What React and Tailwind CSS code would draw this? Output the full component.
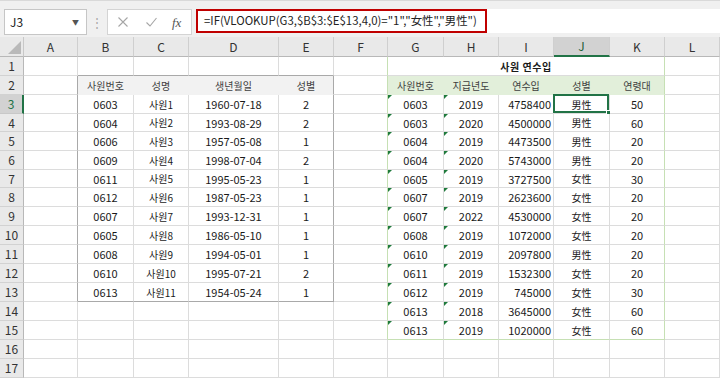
import React from "react";

const W = ["w-[54px]", "w-[56px]", "w-[55px]", "w-[90px]", "w-[55px]", "w-[54px]", "w-[56px]", "w-[55px]", "w-[55px]", "w-[56px]", "w-[55px]", "w-[55px]"];
const COLS = ["A", "B", "C", "D", "E", "F", "G", "H", "I", "J", "K", "L"];
const ROWH = { 4: "h-[18px]", 7: "h-[18px]" };

const LEFT = [
  ["0603", "사원1", "1960-07-18", "2"],
  ["0604", "사원2", "1993-08-29", "2"],
  ["0606", "사원3", "1957-05-08", "1"],
  ["0609", "사원4", "1998-07-04", "2"],
  ["0611", "사원5", "1995-05-23", "1"],
  ["0612", "사원6", "1987-05-23", "1"],
  ["0607", "사원7", "1993-12-31", "1"],
  ["0605", "사원8", "1986-05-10", "1"],
  ["0608", "사원9", "1994-05-01", "1"],
  ["0610", "사원10", "1995-07-21", "2"],
  ["0613", "사원11", "1954-05-24", "1"],
];
const RIGHT = [
  ["0603", "2019", "4758400", "男性", "50"],
  ["0603", "2020", "4500000", "男性", "60"],
  ["0604", "2019", "4473500", "男性", "20"],
  ["0604", "2020", "5743000", "男性", "20"],
  ["0605", "2019", "3727500", "女性", "30"],
  ["0607", "2019", "2623600", "女性", "20"],
  ["0607", "2022", "4530000", "女性", "20"],
  ["0608", "2019", "1072000", "女性", "20"],
  ["0610", "2019", "2097800", "男性", "20"],
  ["0611", "2019", "1532300", "女性", "20"],
  ["0612", "2019", "745000", "女性", "30"],
  ["0613", "2018", "3645000", "女性", "60"],
  ["0613", "2019", "1020000", "女性", "60"],
];

function Cell({ c, r, hClass }) {
  let rc = "border-r-[#dcdcdc]";
  let bc = "border-b-[#dcdcdc]";
  let bg = "bg-white";
  let content = null;
  let align = "justify-center";
  let tc = "text-[#1a1a1a]";
  let tri = false;
  let sel = false;

  if (r >= 2 && r <= 13 && (c === 0 || c === 4)) rc = "border-r-[#a9a9a9]";
  if (c >= 1 && c <= 4 && (r === 1 || r === 13)) bc = "border-b-[#a9a9a9]";
  if (r === 2 && c >= 1 && c <= 4) {
    bg = "bg-[#f2f2f2]";
    bc = "border-b-[#f2f2f2]";
    if (c < 4) rc = "border-r-[#f2f2f2]";
    content = ["사원번호", "성명", "생년월일", "성별"][c - 1];
    tc = "text-[#404040]";
  }
  if (r >= 3 && r <= 13 && c >= 1 && c <= 4) {
    content = LEFT[r - 3][c - 1];
  }
  if (r >= 1 && r <= 15 && (c === 5 || c === 10)) rc = "border-r-[#c6e0b4]";
  if (c >= 6 && c <= 10 && r === 15) bc = "border-b-[#c6e0b4]";
  if (r === 2 && c >= 6 && c <= 10) {
    bg = "bg-[#e2efda]";
    bc = "border-b-[#e2efda]";
    if (c < 10) rc = "border-r-[#e2efda]";
    content = ["사원번호", "지급년도", "연수입", "성별", "연령대"][c - 6];
    tc = "text-[#404040]";
  }
  if (r >= 3 && r <= 15 && c >= 6 && c <= 10) {
    content = RIGHT[r - 3][c - 6];
    if (c === 8) align = "justify-end pr-[2px]";
    if (c === 6 || c === 7) tri = true;
    if (c === 9 && r === 3) sel = true;
  }
  const cjk = content && /[^\x00-\x7f]/.test(content);

  return (
    <div className={`relative shrink-0 flex items-center border-r border-b ${W[c]} ${hClass} ${rc} ${bc} ${bg} ${align} ${tc}`}>
      {tri && (
        <div className="absolute left-0 top-0 w-[4px] h-[4px] bg-[#1f7a3c] [clip-path:polygon(0_0,100%_0,0_100%)]" />
      )}
      {content && (
        <span className={`leading-none pt-[1px] ${cjk ? "text-[10px]" : "text-[11px]"}`}>{content}</span>
      )}
      {sel && (
        <div className="absolute -left-[1px] -top-[1px] right-0 bottom-0 border-2 border-[#217346]">
          <div className="absolute -right-[4px] -bottom-[4px] w-[5px] h-[5px] bg-[#217346] border border-white" />
        </div>
      )}
    </div>
  );
}

function Row({ r }) {
  const hClass = ROWH[r] || "h-[19px]";
  const isSel = r === 3;
  const cells = [];
  for (let c = 0; c < 12; c++) {
    if (r === 1 && c === 6) {
      cells.push(
        <div key="m" className={`shrink-0 w-[277px] ${hClass} flex items-center justify-center border-r border-b border-r-[#c6e0b4] border-b-[#dcdcdc] bg-white font-bold text-[#1a1a1a]`}>
          <span className="leading-none pt-[1px] text-[10px] tracking-[0.5px]">사원 연수입</span>
        </div>
      );
      c = 10;
      continue;
    }
    cells.push(<Cell key={c} c={c} r={r} hClass={hClass} />);
  }
  return (
    <div className="flex">
      <div
        className={`shrink-0 w-[24px] ${hClass} flex items-center justify-center border-b text-[12px] ${
          isSel
            ? "bg-[#d2d2d2] border-r-2 border-r-[#217346] border-b-[#c8c8c8] text-[#217346]"
            : "bg-[#e9e9e9] border-r border-r-[#b8b8b8] border-b-[#d2d2d2] text-[#333]"
        }`}
      >
        <span className="leading-none">{r}</span>
      </div>
      {cells}
    </div>
  );
}

export default function App() {
  const rows = [];
  for (let r = 1; r <= 17; r++) rows.push(<Row key={r} r={r} />);
  return (
    <div className="w-[720px] h-[379px] overflow-hidden bg-white font-['Noto_Sans_CJK_KR','Noto_Sans',sans-serif] text-[10px] select-none">
      {/* Formula bar */}
      <div className="h-[37px] bg-[#f0f0f0] border-t border-t-[#d9d9d9] flex items-start pt-[8px]">
        <div className="ml-[4px] w-[83px] h-[26px] bg-white border border-[#c6c6c6] flex items-center justify-between pl-[5px] pr-[7px]">
          <span className="text-[12px] text-[#222] leading-none">J3</span>
          <span className="text-[7px] text-[#555] leading-none">▼</span>
        </div>
        <div className="w-[20px] h-[26px] flex items-center justify-center text-[#a8a8a8] text-[12px] leading-none">⋮</div>
        <div className="w-[85px] h-[26px] bg-white border border-[#d4d4d4] flex items-center">
          <svg width="12" height="12" viewBox="0 0 12 12" className="ml-[9px]">
            <path d="M1.5 1.5 L10.5 10.5 M10.5 1.5 L1.5 10.5" stroke="#a6a6a6" strokeWidth="1.1" fill="none" />
          </svg>
          <svg width="13" height="12" viewBox="0 0 13 12" className="ml-[16px]">
            <path d="M1.5 6.5 L5 10 L11.5 2" stroke="#a6a6a6" strokeWidth="1.1" fill="none" />
          </svg>
          <span className="ml-[14px] text-[13px] italic font-['Liberation_Serif',serif] text-[#555] leading-none">fx</span>
        </div>
        <div className="ml-[4px] flex-1 h-[24px] bg-white flex">
          <div className="w-[291px] h-[24px] border-2 border-[#c00000] flex items-center pl-[6px]">
            <span className="text-[11.4px] text-[#222] leading-none whitespace-nowrap">=IF(VLOOKUP(G3,$B$3:$E$13,4,0)="1","女性","男性")</span>
          </div>
        </div>
      </div>
      {/* Column headers */}
      <div className="flex h-[20px] bg-[#e9e9e9]">
        <div className="shrink-0 w-[24px] h-[20px] border-r border-b border-r-[#c8c8c8] border-b-[#b8b8b8] flex items-end justify-end pr-[2px] pb-[2px]">
          <div className="w-[13px] h-[13px] bg-[#b9b9b9] [clip-path:polygon(100%_0,100%_100%,0_100%)]" />
        </div>
        {COLS.map((col, i) => (
          <div
            key={col}
            className={`shrink-0 ${W[i]} h-[20px] flex items-center justify-center text-[12px] border-r border-r-[#cfcfcf] ${
              col === "J" ? "bg-[#d2d2d2] border-b-2 border-b-[#217346] text-[#1d5e36]" : "border-b border-b-[#b8b8b8] text-[#333]"
            }`}
          >
            <span className="leading-none">{col}</span>
          </div>
        ))}
      </div>
      {rows}
    </div>
  );
}
